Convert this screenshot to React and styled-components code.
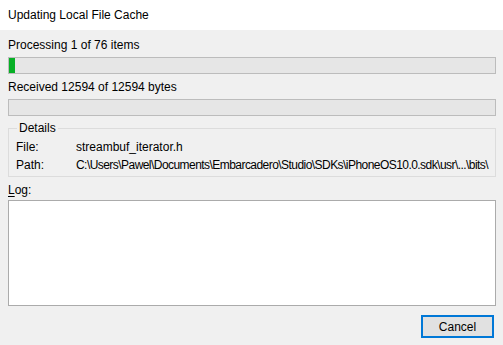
import React from 'react';
import styled, { createGlobalStyle } from 'styled-components';

const GlobalStyle = createGlobalStyle`
	html, body {
		margin: 0;
		padding: 0;
		background: #f0f0f0;
	}
	body {
		font-family: 'Liberation Sans', Arial, sans-serif;
		font-size: 12px;
		color: #000;
	}
`;

const App = () => {
	return (
		<Window>
			<GlobalStyle />
			<TitleBar>Updating Local File Cache</TitleBar>
			<Body>
				<Caption top={7}>Processing 1 of 76 items</Caption>
				<Progress>
					<Chunk style={{ width: `${(1 / 76) * 100}%` }} />
				</Progress>
				<Caption top={5}>Received 12594 of 12594 bytes</Caption>
				<Progress>
					<Chunk style={{ width: '0%' }} />
				</Progress>
				<Group>
					<Legend>Details</Legend>
					<DetailRow>
						<span>File:</span>
						<span>streambuf_iterator.h</span>
					</DetailRow>
					<DetailRow tight>
						<span>Path:</span>
						<span>C:\Users\Pawel\Documents\Embarcadero\Studio\SDKs\iPhoneOS10.0.sdk\usr\...\bits\</span>
					</DetailRow>
				</Group>
				<Caption top={5}>
					<u>L</u>og:
				</Caption>
				<LogBox />
				<Footer>
					<Button>Cancel</Button>
				</Footer>
			</Body>
		</Window>
	);
};

export default App;

const Window = styled.div`
	width: 503px;
	height: 345px;
	display: flex;
	flex-direction: column;
	background: #f0f0f0;
	overflow: hidden;
`;

const TitleBar = styled.div`
	height: 30px;
	flex: none;
	display: flex;
	align-items: center;
	padding-left: 8px;
	background: #fff;
`;

const Body = styled.div`
	flex: 1;
	display: flex;
	flex-direction: column;
	padding: 0 7px 0 8px;
`;

const Caption = styled.div`
	line-height: 16px;
	margin-top: ${(p) => p.top}px;
	margin-bottom: 4px;
	u {
		text-underline-offset: 2px;
	}
`;

const Progress = styled.div`
	height: 15px;
	border: 1px solid #bcbcbc;
	background: #e6e6e6;
	display: flex;
`;

const Chunk = styled.div`
	height: 100%;
	background: #06b025;
`;

const Group = styled.fieldset`
	margin: 4px 0 0 0;
	padding: 2px 7px 2px 7px;
	border: 1px solid #dcdcdc;
	min-width: 0;
`;

const Legend = styled.legend`
	padding: 0 2px;
	margin-left: 1px;
	line-height: 16px;
`;

const DetailRow = styled.div`
	display: grid;
	grid-template-columns: 60px 1fr;
	line-height: 18px;
	white-space: nowrap;
	span + span {
		letter-spacing: ${(p) => (p.tight ? '-0.55px' : '0')};
	}
`;

const LogBox = styled.div`
	height: 104px;
	margin-top: -2px;
	border: 1px solid #ababab;
	background: #fff;
`;

const Footer = styled.div`
	display: flex;
	justify-content: flex-end;
	padding-top: 9px;
	padding-right: 2px;
`;

const Button = styled.button`
	width: 73px;
	height: 23px;
	padding: 0;
	border: 2px solid #0078d7;
	background: #e1e1e1;
	font: inherit;
	color: #000;
	border-radius: 0;
`;
